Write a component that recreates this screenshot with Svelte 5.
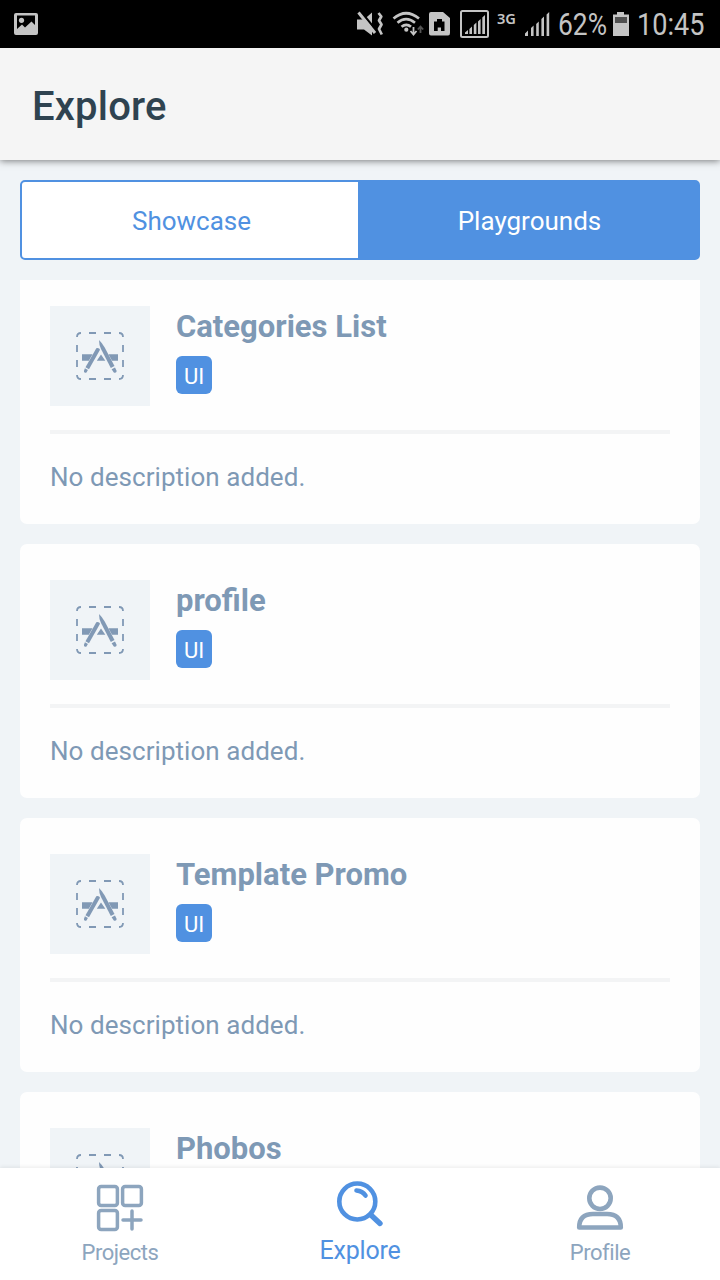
<script>
  const projects = ['Categories List', 'profile', 'Template Promo', 'Phobos'];
</script>

<div class="screen">
  <div class="status">
    <svg class="picture" width="24" height="22" viewBox="0 0 24 22">
      <path fill="#c4c4c4" fill-rule="evenodd" d="M2 0h20q2 0 2 2v18q0 2-2 2H2q-2 0-2-2V2Q0 0 2 0zM3 2.500V16l5-4.500 3 3 6.500-6L21 12V2.500z" />
      <circle cx="7.500" cy="7.300" r="2.600" fill="#c4c4c4" />
    </svg>
    <svg class="signals" width="196" height="48" viewBox="354 0 196 48" fill="#c4c4c4">
      <path d="M357 19.500h7l8-7v23l-8-6h-7z" />
      <path d="M361.500 12.500L377 31.500" stroke="#000" stroke-width="2.500" />
      <path d="M358.500 12.500L375 33" stroke="#c4c4c4" stroke-width="3" />
      <path d="M378.500 13l2.800 3.500-2.300 4 2.500 4-2.500 4.500 2.800 5.500" fill="none" stroke="#c4c4c4" stroke-width="2.700" stroke-linejoin="round" />
      <g fill="none" stroke="#c4c4c4" stroke-width="2.700">
        <path d="M393.500 18.500q12.500-10.500 25.500 0M397.500 22.700q8.500-7 17.500 0M401.500 26.800q4.800-4 9.500 0" />
      </g>
      <circle cx="406.300" cy="29.700" r="2.100" />
      <path d="M413.500 27v7M410.500 31l3 3.500 3-3.500" fill="none" stroke="#c4c4c4" stroke-width="1.800" />
      <path d="M420.500 33v-6M417.800 29.500l2.700-3 2.700 3" fill="none" stroke="#555" stroke-width="1.800" />
      <path fill-rule="evenodd" d="M431 12h12l7 6v15q0 2.500-2 2.500h-17q-2 0-2-2V14q0-2 2-2zM434 21.500V31h3.700v-3.500h3.300V31h3.500v-9.500H442v-2.500h-5v2.500z" />
      <rect x="461" y="11" width="27" height="26" rx="1.500" fill="none" stroke="#c4c4c4" stroke-width="2" />
      <path d="M465 34v-1.500l3-2.500V34zM469.400 34v-5l2.600-2.500V34zM473.800 34v-9l2.600-2.500V34zM478 34V21.500l2.600-2.500v15zM482.300 34V17.500l2.700-2.500v19z" />
      <text x="497" y="24" font-family="'Noto Sans', sans-serif" font-weight="600" font-size="15" textLength="19" lengthAdjust="spacingAndGlyphs">3G</text>
      <path d="M525 36v-2.500l3-3V36zM531 36v-8l2.600-2.500V36zM536.200 36V24l2.600-2.500V36zM541.400 36V19l2.600-2.500V36zM546.600 36V14.500l2.600-2.500v24z" />
    </svg>
    <svg class="readings" width="162" height="48" viewBox="550 0 162 48" fill="#c4c4c4" font-family="Roboto, sans-serif" font-size="31">
      <text x="558" y="35" textLength="49" lengthAdjust="spacingAndGlyphs">62%</text>
      <path d="M617 12h7v2.500h5V36h-16V14.500h4z" />
      <path d="M615 17h12v6h-12z" fill="#505050" />
      <text x="637" y="35" textLength="67.500" lengthAdjust="spacingAndGlyphs">10:45</text>
    </svg>
  </div>

  <header>Explore</header>

  <div class="tabs">
    <div class="tab">Showcase</div>
    <div class="tab active">Playgrounds</div>
  </div>

  <main>
    {#each projects as name}
      <section class="card">
        <div class="top">
          <div class="thumb">
            <svg width="50" height="50" viewBox="0 0 50 50">
              <g fill="none" stroke="#8199b5" stroke-width="1.800">
                <path d="M2 6Q2 2 6 2M44 2q4 0 4 4M48 44q0 4-4 4M6 48q-4 0-4-4" />
                <path d="M14 2h7M29 2h7M14 48h7M29 48h7M2 14v7M2 29v7M48 14v7M48 29v7" />
              </g>
              <g fill="#8199b5">
                <path d="M7 23.200h10.500L13.800 29.800H7zM26 23.500l4.300 6.300h-8.500zM33.500 23.200H43v6.600h-6z" />
                <path d="M21.300 17.200q3-.8 3.700 1.600L14 38.200l-3.500-2z" />
                <path d="M24 9q3.200 3 5.700 7.500L39.500 35l-3.700 2L26 18q-2-4-2-9z" />
                <path d="M9.900 37.300l3 1.700-1.400 2.500q-2.800.8-2.600-1.500zM36.600 38.300l3.400-1.800 1.700 3.500q-.3 2.500-2.900 1.500z" />
              </g>
            </svg>
          </div>
          <div class="info">
            <h2>{name}</h2>
            <span class="tag">UI</span>
          </div>
        </div>
        <p>No description added.</p>
      </section>
    {/each}
  </main>

  <nav>
    <div class="item">
      <svg width="50" height="50" viewBox="0 0 50 50" fill="none" stroke="#8da5be" stroke-width="3.500">
        <rect x="3.600" y="3.600" width="18.800" height="18.800" rx="2.500" />
        <rect x="27.600" y="3.600" width="18.800" height="18.800" rx="2.500" />
        <rect x="3.600" y="27.600" width="18.800" height="18.800" rx="2.500" />
        <path d="M37 28v18M28 37h18" stroke-linecap="round" />
      </svg>
      <span>Projects</span>
    </div>
    <div class="item current">
      <svg width="50" height="50" viewBox="0 0 50 50" fill="none" stroke="#5091e1" stroke-linecap="round">
        <circle cx="22.300" cy="22.500" r="18" stroke-width="4.600" />
        <path d="M36.500 36.500l8.500 8" stroke-width="5.400" />
        <path d="M21.500 11.500q6 .5 9 5" stroke-width="4.600" />
      </svg>
      <span>Explore</span>
    </div>
    <div class="item">
      <svg width="50" height="50" viewBox="0 0 50 50" fill="none" stroke="#8da5be" stroke-width="4.600">
        <circle cx="25" cy="15.300" r="10.700" />
        <path d="M4.200 44.500Q4.200 31 18 31h14q13.800 0 13.800 13.500z" stroke-linejoin="round" />
      </svg>
      <span>Profile</span>
    </div>
  </nav>
</div>

<style>
  :global(body) { margin: 0; }
  .screen {
    width: 720px;
    height: 1280px;
    display: flex;
    flex-direction: column;
    overflow: hidden;
    background: #f0f4f7;
    font-family: Roboto, sans-serif;
    color: #7e99b5;
  }
  .status {
    flex: 0 0 48px;
    display: flex;
    align-items: center;
    background: #000;
    padding: 0 8px 0 14px;
  }
  svg { display: block; flex: none; overflow: visible; }
  .signals { margin-left: auto; }
  header {
    flex: 0 0 112px;
    box-sizing: border-box;
    padding: 6px 32px 0;
    line-height: 106px;
    background: #f5f5f5;
    color: #2f4350;
    font-size: 40px;
    letter-spacing: 0.2px;
    font-weight: 500;
    box-shadow: 0 1px 7px rgba(0, 0, 0, 0.5);
  }
  .tabs {
    flex: 0 0 80px;
    box-sizing: border-box;
    display: flex;
    margin: 20px 20px 0;
    border: 2px solid #5091e1;
    border-radius: 5px;
    background: #fff;
  }
  .tab {
    box-sizing: border-box;
    width: 336px;
    height: 76px;
    padding: 2px 0 0 3px;
    text-align: center;
    font-size: 26px;
    line-height: 74px;
    color: #5091e1;
  }
  .tab + .tab { width: 340px; }
  .tab.active { background: #5091e1; color: #fff; }
  main {
    flex: 1 1 0;
    min-height: 0;
    overflow: hidden;
    margin: 20px 20px 0;
  }
  .card {
    box-sizing: border-box;
    height: 254px;
    padding: 36px 30px 0;
    margin-bottom: 20px;
    background: #fefefe;
    border-radius: 7px;
  }
  .card:first-child { margin-top: -10px; }
  .top {
    display: flex;
    gap: 26px;
    height: 124px;
    border-bottom: 4px solid #f3f4f5;
  }
  .thumb {
    width: 100px;
    height: 100px;
    display: grid;
    place-items: center;
    background: #f0f4f7;
  }
  h2 {
    margin: 3px 0 11px;
    font-size: 31px;
    line-height: 36px;
    font-weight: 700;
  }
  .tag {
    display: block;
    width: 36px;
    height: 38px;
    border-radius: 6px;
    background: #5091e1;
    color: #fff;
    text-align: center;
    font-size: 22px;
    line-height: 42px;
  }
  p {
    margin: 26px 0 0;
    font-size: 26px;
    line-height: 34px;
    letter-spacing: 0.05px;
  }
  nav {
    flex: 0 0 112px;
    display: flex;
    background: #fff;
    box-shadow: 0 -1px 4px rgba(0, 0, 0, 0.08);
  }
  .item {
    flex: 1;
    display: flex;
    flex-direction: column;
    align-items: center;
    padding-top: 15px;
    font-size: 22px;
    letter-spacing: -0.45px;
    line-height: 30px;
    color: #8da5be;
  }
  .item span { margin-top: 5px; }
  .current { padding-top: 11px; font-size: 25px; letter-spacing: -0.2px; color: #5091e1; }
  .current span { margin-top: 7px; }
</style>
